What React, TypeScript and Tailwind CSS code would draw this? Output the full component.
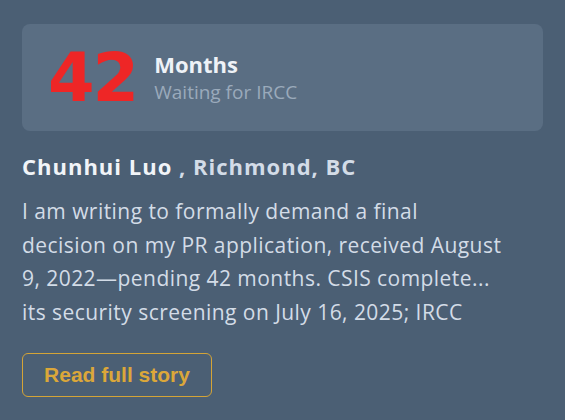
export default function App() {
  return (
    <div className="w-[565px] h-[420px] bg-[#4b5f74] px-[22px] pt-[24px] font-['Open_Sans',sans-serif]">
      <div className="flex items-center gap-[17px] rounded-[8px] bg-[#5a6e83] pl-[26px] h-[107px]">
        <div className="font-['DejaVu_Sans',sans-serif] font-bold text-[67px] leading-none text-[#ee2626] tracking-[-2px] pt-[2px]">42</div>
        <div className="flex flex-col">
          <span className="text-[22px] font-bold text-[#eef2f7] leading-[28px]">Months</span>
          <span className="text-[19px] text-[#9aaabb] leading-[28px]">Waiting for IRCC</span>
        </div>
      </div>
      <div className="mt-[20px] text-[22px] font-bold leading-[30px] tracking-[1px]">
        <span className="text-[#f1f4f8]">Chunhui Luo</span>
        <span className="text-[#d3dce7]"> , Richmond, BC</span>
      </div>
      <p className="mt-[14px] text-[21px] leading-[33.5px] tracking-[0.45px] text-[#d3dce7] whitespace-nowrap">
        I am writing to formally demand a final
        <br />
        decision on my PR application, received August
        <br />
        9, 2022—pending 42 months. CSIS complete...
        <br />
        its security screening on July 16, 2025; IRCC
      </p>
      <button className="mt-[24px] h-[44px] w-[190px] rounded-[6px] border border-[#d4a437] font-['Liberation_Sans',sans-serif] font-bold text-[21px] text-[#dba73a]">
        Read full story
      </button>
    </div>
  );
}
